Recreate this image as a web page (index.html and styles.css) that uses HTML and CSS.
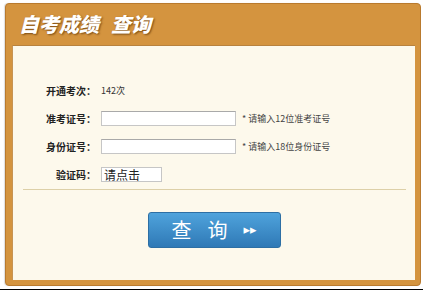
FILE: index.html
```html
<!DOCTYPE html>
<html lang="zh-CN">
<head>
    <meta charset="UTF-8">
    <meta name="viewport" content="width=device-width, initial-scale=1.0">
    <link rel="stylesheet" href="styles.css">
</head>
<body>

<div class="box">
    <div class="box-title">自考成绩<span class="title-gap"></span>查询</div>
    <div class="panel">
        <div class="form">
            <div class="label">开通考次：</div>
            <div class="value">142次</div>

            <div class="label">准考证号：</div>
            <div class="value"><input type="text" class="field"><span class="hint">* 请输入12位准考证号</span></div>

            <div class="label">身份证号：</div>
            <div class="value"><input type="text" class="field"><span class="hint">* 请输入18位身份证号</span></div>

            <div class="label">验证码：</div>
            <div class="value"><span class="code">请点击</span></div>
        </div>

        <div class="divider"></div>

        <div class="actions">
            <button class="btn"><span class="btn-text">查</span><span class="btn-text">询</span><span class="arrows">&#9656;&#9656;</span></button>
        </div>
    </div>
</div>

<div class="bottom-line"></div>

</body>
</html>
```

FILE: styles.css
```css
body {
    margin: 0;
    background-color: #fff;
    font-family: "Liberation Sans", "Noto Sans CJK SC", sans-serif;
    color: #333;
}

.box {
    margin: 3px 2px 0 5px;
    width: 416px;
    height: 283px;
    box-sizing: border-box;
    background-color: #d4943f;
    border: 1px solid #b97a2e;
    border-radius: 4px;
    box-shadow: -1px 0 1px #ddd;
    padding: 0 5px 5px 6px;
    display: flex;
    flex-direction: column;
}

.box-title {
    height: 41px;
    box-sizing: border-box;
    padding: 7px 0 0 7px;
    font-family: "Noto Sans CJK SC", sans-serif;
    font-size: 20px;
    font-weight: 900;
    font-style: italic;
    color: #fff;
    line-height: 26px;
    text-shadow: 1px 1px 2px #7a4a12;
}

.title-gap {
    display: inline-block;
    width: 12px;
}

.panel {
    flex: 1;
    background-color: #fdf9ec;
    border-top: 1px solid #b8823e;
    border-left: 1px solid #c79453;
    padding: 30px 0 0 0;
}

.form {
    display: grid;
    grid-template-columns: 83px 1fr;
    grid-auto-rows: 28px;
    column-gap: 5px;
    align-items: center;
}

.label {
    text-align: right;
    font-family: "Noto Sans CJK SC", sans-serif;
    font-size: 10px;
    font-weight: bold;
    color: #222;
}

.value {
    display: flex;
    align-items: center;
    font-family: "Noto Sans CJK SC", sans-serif;
    font-size: 9px;
    color: #333;
}

.field {
    width: 135px;
    height: 15px;
    box-sizing: border-box;
    margin: 0;
    border: 1px solid #c6c6c6;
    border-top-color: #a9a9a9;
    background: #fff;
}

.hint {
    margin-left: 6px;
    font-size: 9px;
    color: #444;
}

.code {
    width: 61px;
    height: 15px;
    box-sizing: border-box;
    border: 1px solid #c6c6c6;
    background: #fff;
    font-size: 12px;
    line-height: 13px;
    padding-left: 2px;
    color: #222;
}

.divider {
    margin: 1px 9px 0 10px;
    border-top: 1px solid #ddd0a8;
}

.actions {
    display: flex;
    justify-content: center;
    padding-top: 22px;
}

.btn {
    width: 133px;
    height: 36px;
    border: 1px solid #2d6fa4;
    border-radius: 3px;
    background: linear-gradient(#4fa3dc, #2f79b6);
    color: #fff;
    font-family: "Noto Sans CJK SC", sans-serif;
    font-size: 20px;
    line-height: 30px;
    padding: 0;
    display: flex;
    align-items: center;
    justify-content: center;
    cursor: pointer;
}

.btn-text {
    margin-right: 16px;
}

.arrows {
    font-family: "DejaVu Sans", sans-serif;
    font-size: 13px;
    letter-spacing: 0;
    margin-top: -1px;
}

.bottom-line {
    margin-top: 3px;
    height: 1px;
    background: #000;
}
```
